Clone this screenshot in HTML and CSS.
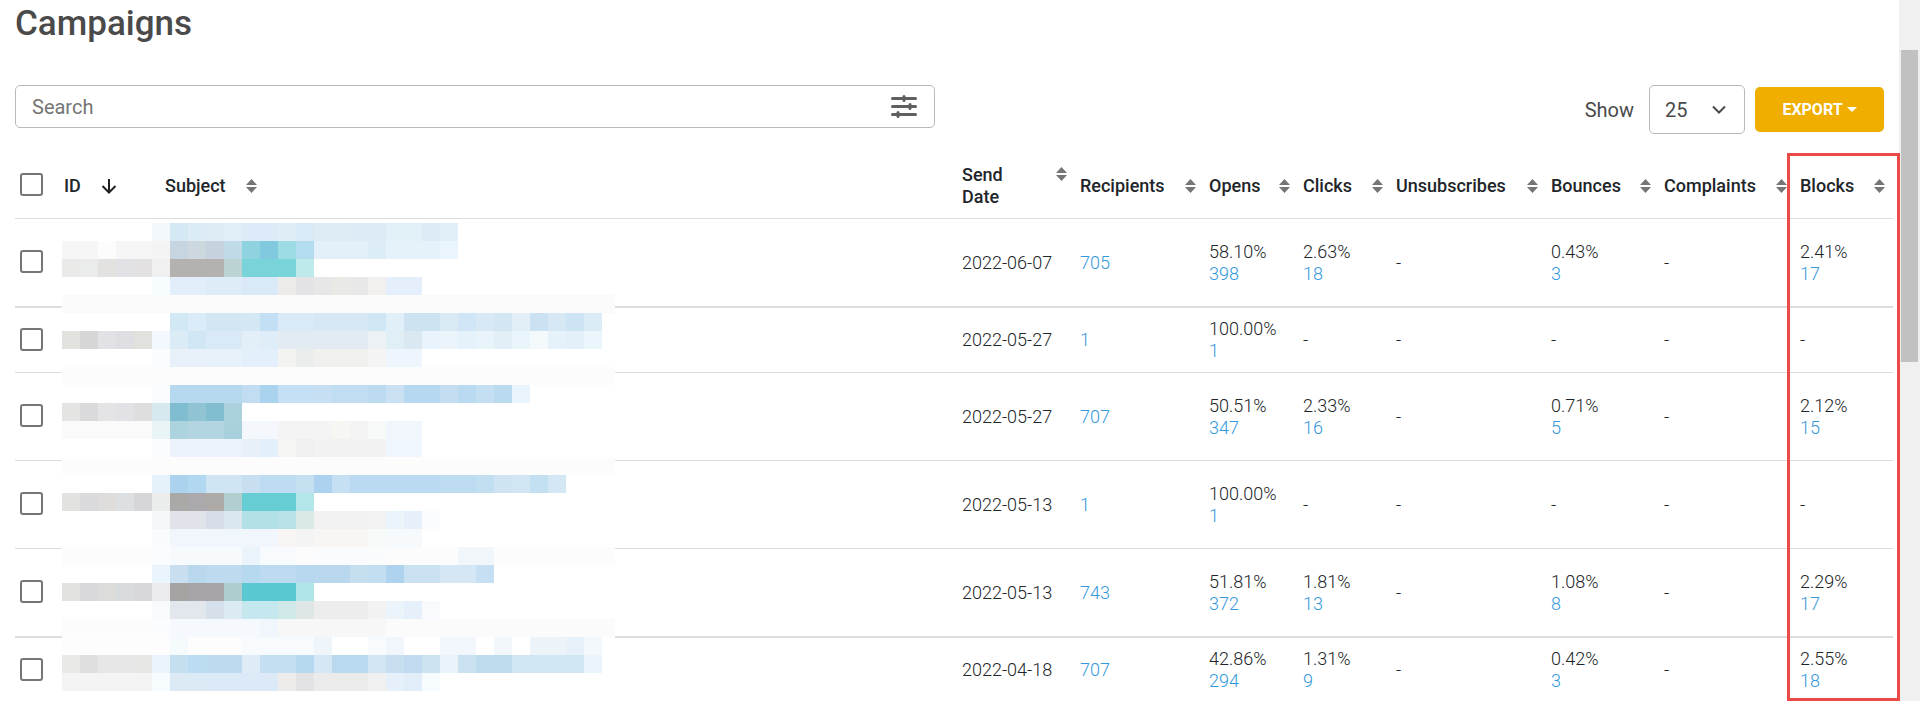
FILE: index.html
```
<!DOCTYPE html>
<html lang="en">
<head>
    <meta charset="UTF-8">
    <meta name="viewport" content="width=device-width, initial-scale=1.0">
    <title>Campaigns</title>
    <link rel="stylesheet" href="styles.css">
</head>
<body>
    <svg class="sprite" aria-hidden="true">
        <symbol id="sort" viewBox="0 0 11 14">
            <path d="M5.5 0 L11 6 H0 Z M0 8 H11 L5.5 14 Z"/>
        </symbol>
    </svg>

    <main class="page">
        <h1>Campaigns</h1>

        <div class="toolbar">
            <div class="search">
                <input type="text" placeholder="Search" aria-label="Search">
                <button type="button" class="filter-btn" aria-label="Filters">
                    <svg width="26" height="23" viewBox="0 0 26 23">
                        <path d="M1.5 3.5 H24.5 M1.5 11.5 H24.5 M1.5 19.5 H24.5" stroke-width="3" stroke-linecap="round"/>
                        <path d="M13 1.5 V5.5 M19 9.5 V13.5 M7 17.5 V21.5" stroke-width="3" stroke-linecap="round"/>
                    </svg>
                </button>
            </div>
            <div class="actions">
                <label for="pageSize">Show</label>
                <div class="select-wrap">
                    <select id="pageSize">
                        <option>10</option>
                        <option selected>25</option>
                        <option>50</option>
                        <option>100</option>
                    </select>
                    <svg class="chevron" width="14" height="9" viewBox="0 0 14 9">
                        <path d="M1 1.5 L7 7.5 L13 1.5"/>
                    </svg>
                </div>
                <button type="button" class="export-btn">EXPORT <span class="caret"></span></button>
            </div>
        </div>

        <div class="table-wrap">
            <table>
                <colgroup>
                    <col class="col-check">
                    <col class="col-id">
                    <col class="col-subject">
                    <col class="col-date">
                    <col class="col-recipients">
                    <col class="col-opens">
                    <col class="col-clicks">
                    <col class="col-unsubs">
                    <col class="col-bounces">
                    <col class="col-complaints">
                    <col class="col-blocks">
                </colgroup>
                <thead>
                    <tr>
                        <th><input type="checkbox" aria-label="Select all"></th>
                        <th>
                            <div class="head left">ID
                                <svg class="arrow" width="16" height="16" viewBox="0 0 16 16">
                                    <path d="M8 1 V14 M1.5 8 L8 14.5 L14.5 8"/>
                                </svg>
                            </div>
                        </th>
                        <th><div class="head left">Subject <svg class="sort"><use href="#sort"/></svg></div></th>
                        <th><div class="head top"><span class="two-lines">Send Date</span> <svg class="sort"><use href="#sort"/></svg></div></th>
                        <th><div class="head">Recipients <svg class="sort"><use href="#sort"/></svg></div></th>
                        <th><div class="head">Opens <svg class="sort"><use href="#sort"/></svg></div></th>
                        <th><div class="head">Clicks <svg class="sort"><use href="#sort"/></svg></div></th>
                        <th><div class="head">Unsubscribes <svg class="sort"><use href="#sort"/></svg></div></th>
                        <th><div class="head">Bounces <svg class="sort"><use href="#sort"/></svg></div></th>
                        <th><div class="head">Complaints <svg class="sort"><use href="#sort"/></svg></div></th>
                        <th><div class="head">Blocks <svg class="sort"><use href="#sort"/></svg></div></th>
                    </tr>
                </thead>
                <tbody>
                    <tr class="tall strong">
                        <td><input type="checkbox" aria-label="Select campaign"></td>
                        <td></td>
                        <td></td>
                        <td>2022-06-07</td>
                        <td><a href="#">705</a></td>
                        <td>58.10%<br><a href="#">398</a></td>
                        <td>2.63%<br><a href="#">18</a></td>
                        <td>-</td>
                        <td>0.43%<br><a href="#">3</a></td>
                        <td>-</td>
                        <td>2.41%<br><a href="#">17</a></td>
                    </tr>
                    <tr>
                        <td><input type="checkbox" aria-label="Select campaign"></td>
                        <td></td>
                        <td></td>
                        <td>2022-05-27</td>
                        <td><a href="#">1</a></td>
                        <td>100.00%<br><a href="#">1</a></td>
                        <td>-</td>
                        <td>-</td>
                        <td>-</td>
                        <td>-</td>
                        <td>-</td>
                    </tr>
                    <tr class="tall">
                        <td><input type="checkbox" aria-label="Select campaign"></td>
                        <td></td>
                        <td></td>
                        <td>2022-05-27</td>
                        <td><a href="#">707</a></td>
                        <td>50.51%<br><a href="#">347</a></td>
                        <td>2.33%<br><a href="#">16</a></td>
                        <td>-</td>
                        <td>0.71%<br><a href="#">5</a></td>
                        <td>-</td>
                        <td>2.12%<br><a href="#">15</a></td>
                    </tr>
                    <tr class="tall">
                        <td><input type="checkbox" aria-label="Select campaign"></td>
                        <td></td>
                        <td></td>
                        <td>2022-05-13</td>
                        <td><a href="#">1</a></td>
                        <td>100.00%<br><a href="#">1</a></td>
                        <td>-</td>
                        <td>-</td>
                        <td>-</td>
                        <td>-</td>
                        <td>-</td>
                    </tr>
                    <tr class="tall strong">
                        <td><input type="checkbox" aria-label="Select campaign"></td>
                        <td></td>
                        <td></td>
                        <td>2022-05-13</td>
                        <td><a href="#">743</a></td>
                        <td>51.81%<br><a href="#">372</a></td>
                        <td>1.81%<br><a href="#">13</a></td>
                        <td>-</td>
                        <td>1.08%<br><a href="#">8</a></td>
                        <td>-</td>
                        <td>2.29%<br><a href="#">17</a></td>
                    </tr>
                    <tr>
                        <td><input type="checkbox" aria-label="Select campaign"></td>
                        <td></td>
                        <td></td>
                        <td>2022-04-18</td>
                        <td><a href="#">707</a></td>
                        <td>42.86%<br><a href="#">294</a></td>
                        <td>1.31%<br><a href="#">9</a></td>
                        <td>-</td>
                        <td>0.42%<br><a href="#">3</a></td>
                        <td>-</td>
                        <td>2.55%<br><a href="#">18</a></td>
                    </tr>
                </tbody>
            </table>
            <svg class="mosaic" id="mosaic" viewBox="0 0 553 468" shape-rendering="crispEdges" aria-hidden="true"></svg>
            <div class="highlight"></div>
        </div>
    </main>

    <div class="scrollbar"><div class="thumb"></div></div>

    <script src="mosaic.js"></script>
</body>
</html>
```

FILE: styles.css
```
* {
    box-sizing: border-box;
    margin: 0;
    padding: 0;
}

body {
    display: flex;
    height: 100vh;
    overflow: hidden;
    font-family: Roboto, sans-serif;
    background-color: #fff;
    color: #212529;
}

input, select, button {
    font-family: inherit;
}

.sprite {
    position: absolute;
    width: 0;
    height: 0;
}

.page {
    flex: 1;
    display: flex;
    flex-direction: column;
    min-width: 0;
    padding: 4px 6px 0 15px;
}

h1 {
    margin-bottom: 41px;
    font-size: 35px;
    font-weight: 500;
    line-height: 40px;
    color: #4a4a4a;
}

/* Toolbar */
.toolbar {
    display: flex;
    justify-content: space-between;
    align-items: flex-start;
    margin-bottom: 19px;
}

.search {
    display: flex;
    align-items: center;
    width: 49%;
    height: 43px;
    padding: 0 17px 0 16px;
    border: 1px solid #b9b9b9;
    border-radius: 5px;
}

.search input {
    flex: 1;
    border: none;
    outline: none;
    font-size: 20px;
    color: #4a4a4a;
}

.search input::placeholder {
    color: #757575;
}

.filter-btn {
    display: flex;
    border: none;
    background: none;
    cursor: pointer;
}

.filter-btn path {
    stroke: #5f5f5f;
}

.actions {
    display: flex;
    align-items: center;
    margin-right: 9px;
    color: #4a4a4a;
}

.actions label {
    margin-right: 15px;
    font-size: 20px;
}

.select-wrap {
    position: relative;
    margin-right: 10px;
}

.select-wrap select {
    display: block;
    width: 96px;
    height: 49px;
    padding-left: 15px;
    appearance: none;
    border: 1px solid #b9b9b9;
    border-radius: 5px;
    background-color: #fff;
    font-size: 20px;
    color: #4a4a4a;
}

.chevron {
    position: absolute;
    top: 20px;
    right: 19px;
    fill: none;
    stroke: #4a4a4a;
    stroke-width: 2;
    pointer-events: none;
}

.export-btn {
    display: flex;
    align-items: center;
    justify-content: center;
    gap: 4px;
    width: 129px;
    height: 45px;
    border: none;
    border-radius: 5px;
    background-color: #efae00;
    font-size: 16px;
    font-weight: 700;
    color: #fff;
    cursor: pointer;
}

.caret {
    border-top: 5px solid #fff;
    border-left: 5px solid transparent;
    border-right: 5px solid transparent;
}

/* Table */
.table-wrap {
    position: relative;
    flex: 1;
    min-height: 0;
}

table {
    width: 100%;
    table-layout: fixed;
    border-collapse: separate;
    border-spacing: 0;
}

.col-check { width: 44px; }
.col-id { width: 101px; }
.col-date { width: 118px; }
.col-recipients { width: 129px; }
.col-opens { width: 94px; }
.col-clicks { width: 93px; }
.col-unsubs { width: 155px; }
.col-bounces { width: 113px; }
.col-complaints { width: 136px; }
.col-blocks { width: 98px; }

th, td {
    box-sizing: content-box;
    height: 64px;
    padding: 0 8px 0 5px;
    border-bottom: 1px solid #ddd;
    font-size: 18px;
    line-height: 22px;
    text-align: left;
    vertical-align: middle;
}

th {
    height: 65px;
    font-weight: 500;
}

td {
    font-weight: 300;
}

.tall td {
    height: 87px;
}

.strong td {
    border-bottom-width: 2px;
}

td a {
    color: #3498db;
    text-decoration: none;
}

.head {
    display: flex;
    align-items: center;
    justify-content: space-between;
}

.head.left {
    justify-content: flex-start;
    gap: 20px;
}

.head.top {
    align-items: flex-start;
}

.head.top .sort {
    margin-top: 3px;
}

.two-lines {
    width: 50px;
}

.sort {
    flex: none;
    width: 11px;
    height: 14px;
    fill: #757575;
}

.arrow {
    fill: none;
    stroke: #212121;
    stroke-width: 2;
}

input[type="checkbox"] {
    display: block;
    width: 23px;
    height: 23px;
    margin-bottom: 2px;
    appearance: none;
    border: 2px solid #757575;
    border-radius: 3px;
    background-color: #fff;
}

input[type="checkbox"]:checked {
    background-color: #757575;
}

/* Pixelated cover over the ID and Subject columns */
.mosaic {
    position: absolute;
    top: 70px;
    left: 47px;
    width: 553px;
    height: 468px;
}

/* Frame around the Blocks column */
.highlight {
    position: absolute;
    top: 0;
    right: -7px;
    bottom: 0;
    width: 113px;
    border: 3px solid #ea4b46;
}

/* Scrollbar */
.scrollbar {
    width: 21px;
    padding: 50px 2px 0;
    background-color: #f0f0f0;
}

.thumb {
    height: 312px;
    background-color: #c1c1c1;
}
```

FILE: mosaic.js
```
// One line per row of cells, "colour*count", a dot is a white cell
const CELL = 18;
const rows = [
    ".*5 f3f8fd d5e9f5 dbecf7 deecf6 e0eef8 dcebf7*2 dfedf7 d9eaf6 deecf6*2 dcebf6*2 e2f0f8*2 dcebf6 e0eef8",
    "f7f6f6*2 fcfcfc f7f6f6*2 f4f4f5 c6d5df cdd8de c6d3df c1dae8 8fd3e0 81c9de 9edce5 b4dcef e3f0fa*3 ddedf8 e5f2fa*3 ebf5fd",
    "eaebe8 e9ecea e3e2e1 e2e1e6 e3e1e2 f0f0f0 b3b2b1*3 bcd3d3 79d4da*3 bfeaec",
    ".*5 f7fcfe e2effa*2 deecf8*2 dae9f7*2 ecebe9 e3e2e4 e8e7e8 e9e9e6 e8e8e8 f1f0ef e4effb*2",
    "fbfbfb*31",
    ".*6 d3e8f5 daecf7 d2e6f4*2 d4e7f4 c3dff4 d9eaf6*2 d7e8f4*3 d1e6f5 e0eff8 cde3f2*2 daeaf5 d0e5f5 d8e8f5 d3e6f4 e2eff7 cbe2f2 d6e8f4 cde4f4 dbecf6",
    "e2e2df d6d6d7 e2e1e5 dfdee3 e1e1dd f2f8fd dcecf7 d1e6f5 d9eaf6*2 e3eff8 dfedf8 e2ebf1*5 ebf1f5 e0eff6 dae9f1 e8f3fb ebf4fa e6f2fa e9f3fa e2eff7 eaf4fb f4f9fc e6f2fa e3f0fa ebf5fc",
    ".*5 fafcfe e8f1f9*2 e7f1fa*2 e3effb*2 f3f3f1 ebecec f0f0ef*3 f4f4f4 eef5fd*2",
    "fcfcfc*31",
    ".*5 fafdff b6d9f0*4 c2dcf1 aad3ee c5dff4*2 c7dff2 c1ddf1*2 bcdaf0 c9e1f2 b6d8f0*2 c4ddf1 b9daf1 c4dff2 badaf0 e9f4fc",
    "e4e4e3 dadadc e4e3e6 e2e1e5 dfdedf d6e9ee 81bdd0 90c4d3 83bed0 abd1dd",
    "fafafa*5 e9f4f6 acd3de b3d5e1*2 a9d0dd f4f8fd*2 f4f4f4*3 f6f6f3 f4f4f4 f8faf9 f0f6fb*2",
    ".*5 fafcfe ecf3fc*4 e7f0f9 e3effa f5f5f4 eff0ef f3f2f2*4 f0f6fd*2",
    "fcfcfc*31",
    ".*5 e5f2fa abd3ee b2d7f0 cfe5f3*2 c7dff1 bddbf1*2 c5e0f1 acd2ef c4e0f2 b9daf0*5 bedcf1*2 c2dff2 cfe4f3 d0e6f3 c3dff2 d3e7f5",
    "e2e2e0 dad9dc dedddc dde0e2 d6d5d7 ebedec aaa9a8 aba9ab aeaaa8 b3cecf 66cdd5*3 b2e6e9",
    ".*5 f6f7f8 e0e4ea*2 d6dde8 dae7f1 b2e0e7*2 b9e2e6 dae8e8 f2f2f2*3 f3f3f3 eaf4fb e6f0fa fbfcfe",
    ".*5 fafbfc f1f6fc*6 f8f5f4 f3f4f3 f7f6f5*3 f8f9f9 f7fafd*2",
    "fcfcfc*5 fafcfd f6fafd*4 ebf4fb f8fbfd*2 fcfcfc f9fbfd*4 fcfcfc*4 f1f6fb*2 fcfcfc*7",
    ".*5 e9f4fc c9dff0 b9d7ed bedaef*2 b6d9f0 bcdbf0*2 b8d8ef b9d8ee*2 c6dff0 c2def0 afd3ee cae1f2*2 d5e7f4*2 c7dff2",
    "e2e2e1 d9d8db dcdcda d8dcdc d8d7da ebebed a5a4a3 a6a4a7*2 aecdce 5ac8d1*3 b0e6e9",
    ".*5 f9fafb e1e7ec*2 d6e0ea dceaf4 c5e8ef*2 cfe8e8 dfe6e6 ededed*3 f2f2f2 ebf3fb e5f0fa f8fafe",
    "fcfcfc*5 fafcfe f5f9fd*5 f0f6fc f7f7f7*6 fbfbfb*13",
    "fdfdfd*6 f5fafd fdfdfe*3 f8fbfd*4 eff6fb .*2 f8fbfd f0f6fb .*2 f1f7fc*2 . f1f7fb . ecf4fa*2 e6f1f9 f2f8fc",
    "e9e9e8 dfdfdf e7e7e8*2 e6e6e3 ebf4fc c5dff1 bbdcf1 bddaef*2 dfebf7 c4def2*2 b7d9f0 d5e7f4 b8d9ee*2 d1e5f3 c8def1 c2dbf1 cce3f2 e9f4fa c9e1f1 bfdcef*2 d0e6f3*4 eaf5fb",
    "f5f4f4*5 f6fbfe dceaf5*2 dce9f6*4 edecea e3e3e5 ebebeb*3 f0f0f0 e6f0fb e1edf9 f6fbfe"
];

const svg = document.getElementById("mosaic");

function addCell(x, y, width, height, fill) {
    const rect = document.createElementNS("http://www.w3.org/2000/svg", "rect");
    rect.setAttribute("x", x);
    rect.setAttribute("y", y);
    rect.setAttribute("width", width);
    rect.setAttribute("height", height);
    rect.setAttribute("fill", fill);
    svg.appendChild(rect);
}

addCell(0, 0, 31 * CELL, rows.length * CELL, "#fff");

rows.forEach((row, y) => {
    let x = 0;
    row.split(" ").forEach(run => {
        const [colour, count] = run.split("*");
        const span = Number(count || 1);
        if (colour !== ".") {
            addCell(x * CELL, y * CELL, span * CELL, CELL, "#" + colour);
        }
        x += span;
    });
});
```
